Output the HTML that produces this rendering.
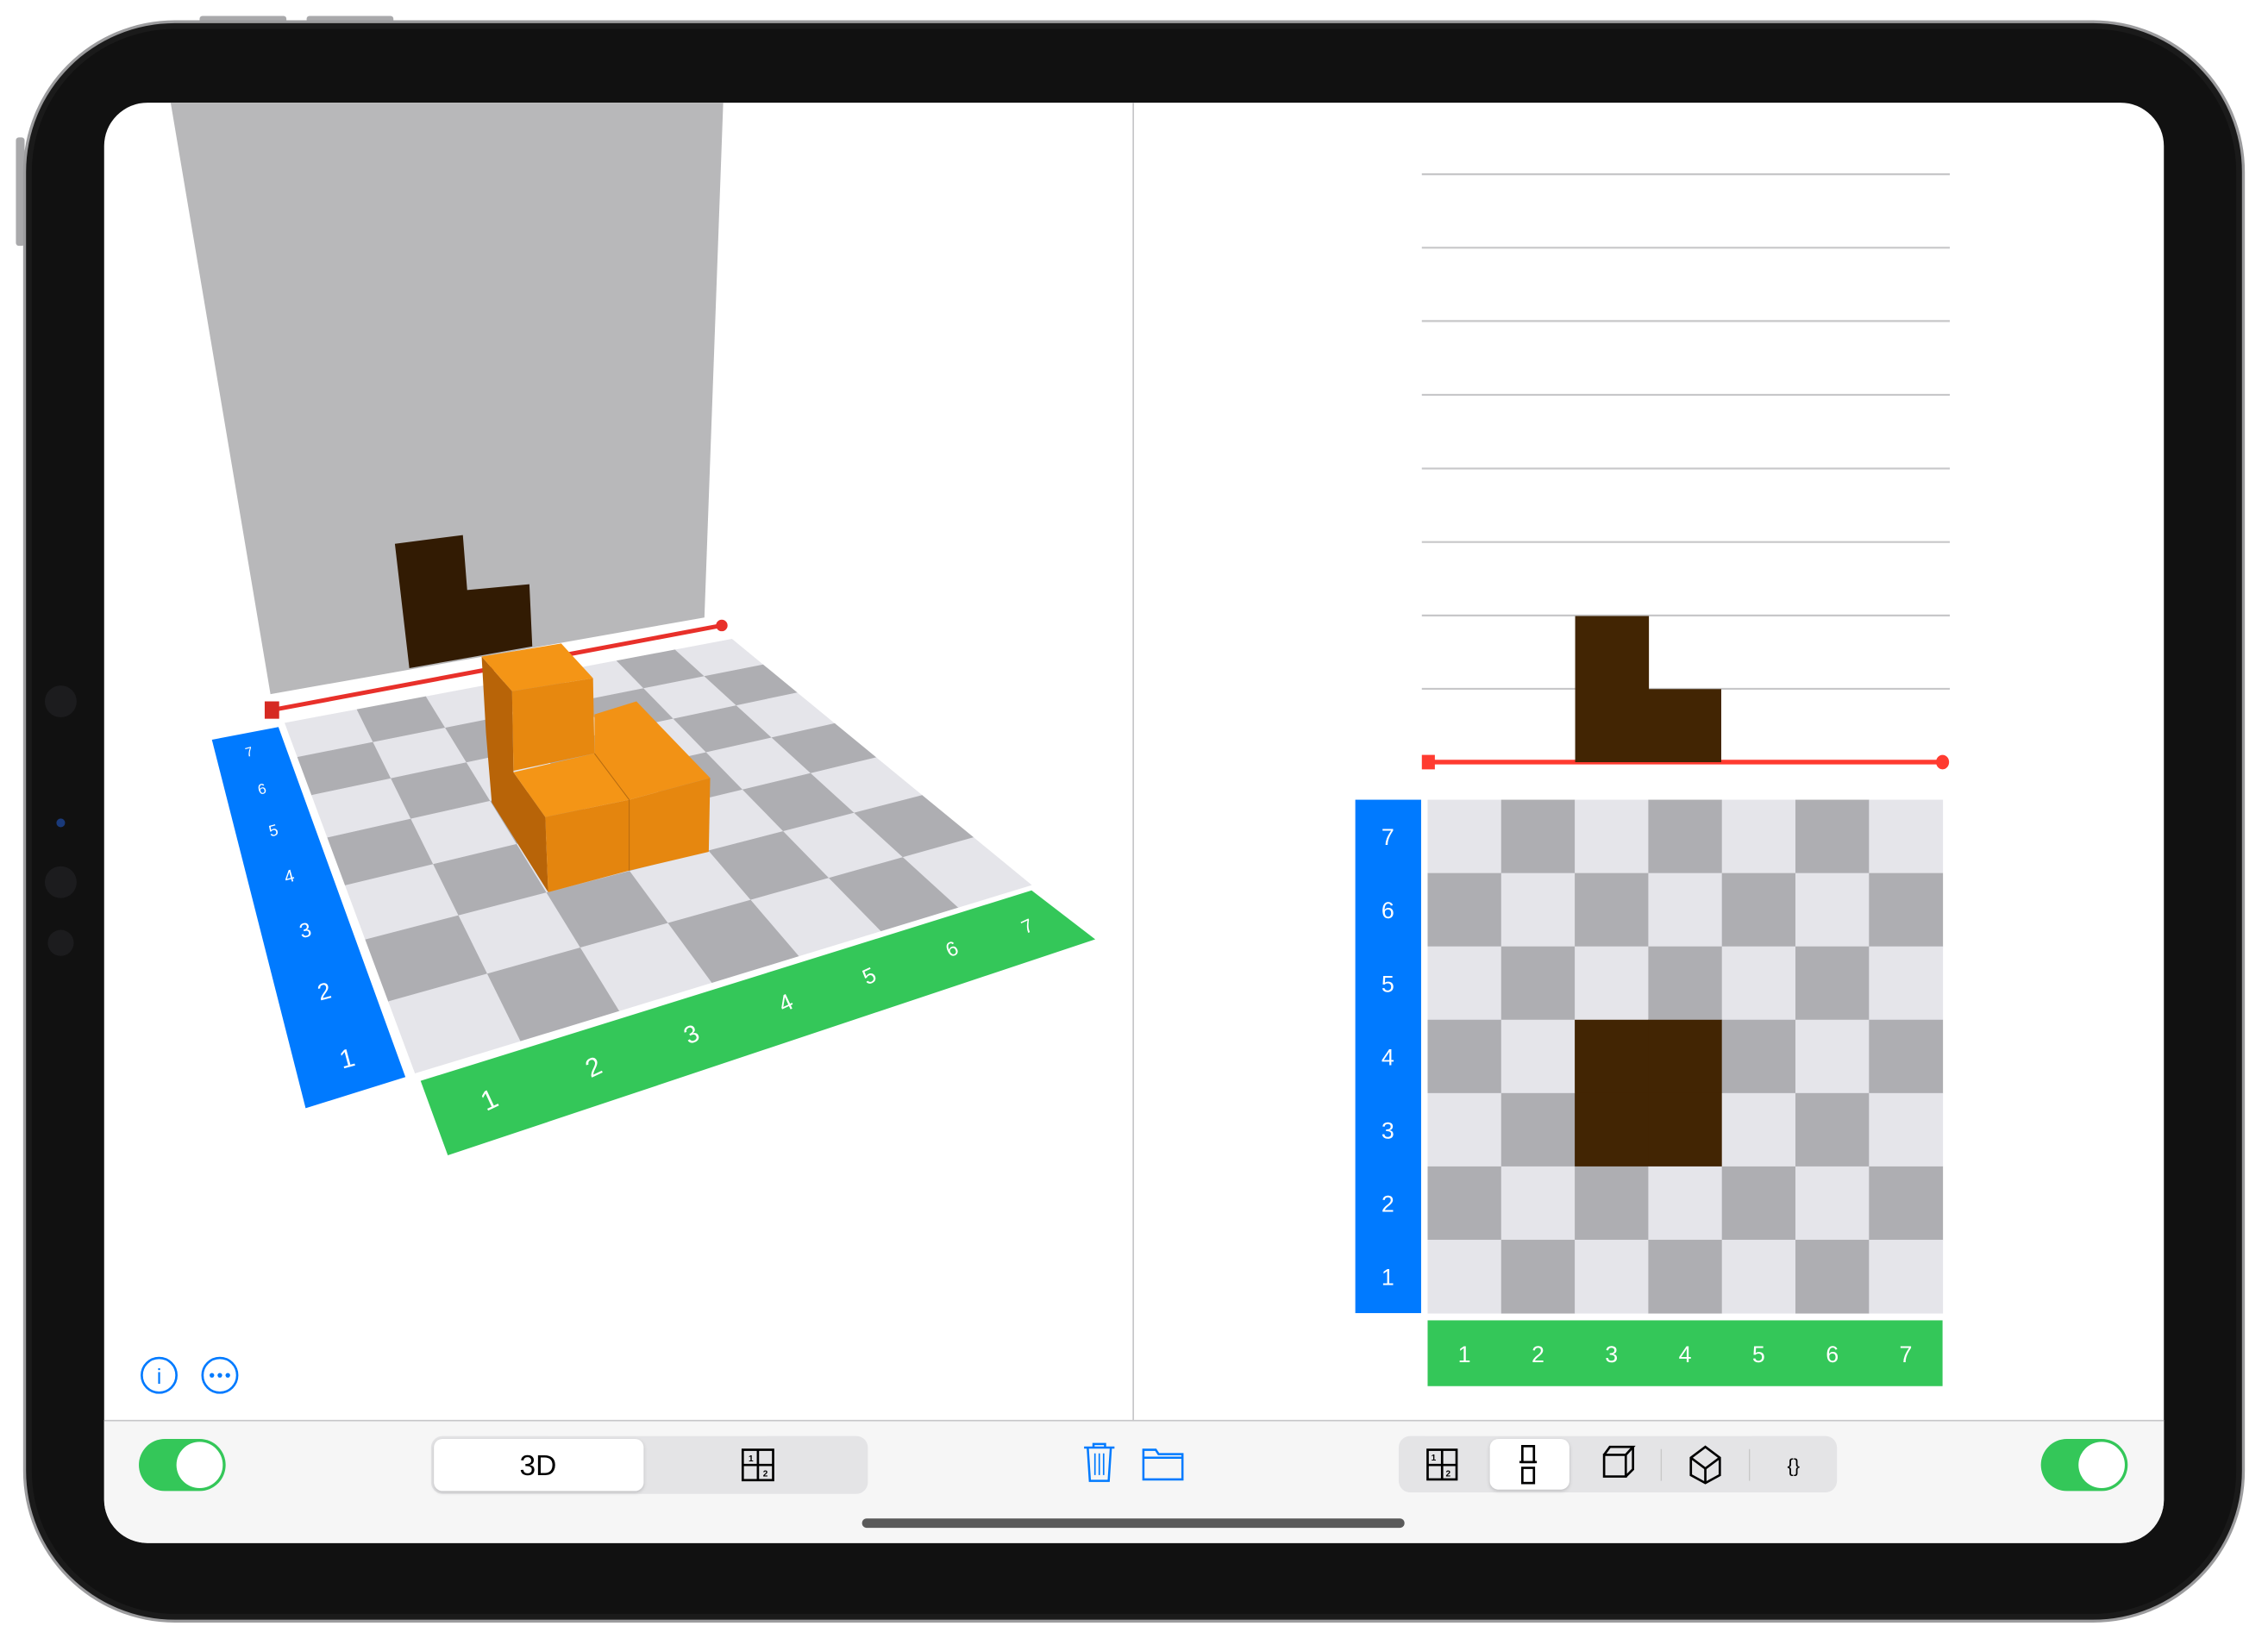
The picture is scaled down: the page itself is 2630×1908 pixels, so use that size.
<!DOCTYPE html>
<html><head><meta charset="utf-8"><style>
html,body{margin:0;padding:0;background:#fff;width:2630px;height:1908px;overflow:hidden}
svg{display:block}
text{font-family:"Liberation Sans","DejaVu Sans",sans-serif}
</style></head><body>
<svg id="s" width="2630" height="1908" viewBox="0 0 1568 1137.5" preserveAspectRatio="none" xmlns="http://www.w3.org/2000/svg">
<defs>
<filter id="sh" x="-20%" y="-20%" width="140%" height="160%"><feDropShadow dx="0" dy="1" stdDeviation="1.2" flood-opacity="0.18"/></filter>
</defs>
<rect width="1568" height="1137.5" fill="#fff"/>
<!-- device -->
<rect x="138" y="11" width="60" height="5" rx="2" fill="#a9a9ab"/>
<rect x="212" y="11" width="60" height="5" rx="2" fill="#a9a9ab"/>
<rect x="11" y="95" width="6" height="75" rx="2" fill="#a9a9ab"/>
<rect x="16" y="14" width="1536" height="1108" rx="105" fill="#9c9c9e"/>
<rect x="18" y="16" width="1532" height="1104" rx="103" fill="#1a1a1a"/>
<rect x="22" y="20" width="1524" height="1096" rx="99" fill="#111"/>
<circle cx="42" cy="485" r="11" fill="#1c1c1e"/>
<circle cx="42" cy="610" r="11" fill="#1c1c1e"/>
<circle cx="42" cy="652" r="9" fill="#1c1c1e"/>
<circle cx="42" cy="569" r="3" fill="#1a3a7a"/>
<!-- screen -->
<rect x="72" y="71" width="1424" height="996" rx="30" fill="#fff"/>
<path d="M72 982 H1496 V1037 A30 30 0 0 1 1466 1067 H102 A30 30 0 0 1 72 1037 Z" fill="#f6f6f6"/>
<line x1="72" y1="982.3" x2="1496" y2="982.3" stroke="#c6c6c8" stroke-width="1"/>
<line x1="783.5" y1="71" x2="783.5" y2="982" stroke="#c6c6c8" stroke-width="1"/>

<!-- 3D wall -->
<polygon points="118,71 500,71 487,427 187,480" fill="#b8b8ba"/>
<polygon points="273,376 320,370 323,408 366,404 368,447 283,462" fill="#321b03"/>
<g id="board"></g>
<polygon points="146.5,511.5 192.5,502.7 280.3,744.8 211.3,766.3" fill="#007aff"/>
<polygon points="290.8,747.4 713.2,615.7 757.2,649.5 309.6,798.9" fill="#34c759"/>
<g fill="#fff">
<text x="172" y="523" font-size="9" transform="rotate(-15 172 519)" text-anchor="middle">7</text>
<text x="181" y="549" font-size="10" transform="rotate(-15 181 545)" text-anchor="middle">6</text>
<text x="189" y="578" font-size="11" transform="rotate(-15 189 574)" text-anchor="middle">5</text>
<text x="200" y="610" font-size="12" transform="rotate(-15 200 606)" text-anchor="middle">4</text>
<text x="211" y="648" font-size="14" transform="rotate(-15 211 643)" text-anchor="middle">3</text>
<text x="224" y="691" font-size="16" transform="rotate(-15 224 685)" text-anchor="middle">2</text>
<text x="240" y="738" font-size="18" transform="rotate(-15 240 732)" text-anchor="middle">1</text>
<text x="338" y="767" font-size="19" transform="rotate(-25 338 760)" text-anchor="middle">1</text>
<text x="410" y="744" font-size="18" transform="rotate(-25 410 737)" text-anchor="middle">2</text>
<text x="478" y="721" font-size="17" transform="rotate(-25 478 715)" text-anchor="middle">3</text>
<text x="543" y="699" font-size="16" transform="rotate(-25 543 693)" text-anchor="middle">4</text>
<text x="601" y="680" font-size="15" transform="rotate(-25 601 675)" text-anchor="middle">5</text>
<text x="658" y="661" font-size="14" transform="rotate(-25 658 656)" text-anchor="middle">6</text>
<text x="710" y="645" font-size="13" transform="rotate(-25 710 640)" text-anchor="middle">7</text>
</g>
<line x1="188" y1="491" x2="499" y2="432.5" stroke="#e8302a" stroke-width="3"/>
<rect x="183" y="485" width="10" height="12" fill="#d62a22"/>
<circle cx="499" cy="432.5" r="4" fill="#e8302a"/>
<!-- cubes -->
<polygon points="333,454 354,478 355,534 377,565 379,617 340,555 336,507" fill="#b86408"/>
<polygon points="333,454 388,445 410,469 354,478" fill="#f49516"/>
<polygon points="354,478 410,469 411,521 355,533" fill="#e7880f"/>
<polygon points="411,494 440,485 491,538 435,553 411,521" fill="#f29215"/>
<polygon points="355,534 411,521 435,553 377,565" fill="#f49516"/>
<polygon points="377,565 435,553 435,602 379,617" fill="#e4850e"/>
<polygon points="435,553 491,538 490,589 435,602" fill="#e6870f"/>
<line x1="435" y1="553" x2="435" y2="602" stroke="#b56a10" stroke-width="0.6"/>
<line x1="411" y1="521" x2="435" y2="553" stroke="#b56a10" stroke-width="0.6"/>

<!-- right 2D view -->
<g stroke="#c7c7c9" stroke-width="1.3">
<line x1="983" y1="120.5" x2="1348" y2="120.5"/><line x1="983" y1="171.3" x2="1348" y2="171.3"/>
<line x1="983" y1="222" x2="1348" y2="222"/><line x1="983" y1="273" x2="1348" y2="273"/>
<line x1="983" y1="324" x2="1348" y2="324"/><line x1="983" y1="374.8" x2="1348" y2="374.8"/>
<line x1="983" y1="425.6" x2="1348" y2="425.6"/><line x1="983" y1="476.3" x2="1348" y2="476.3"/>
</g>
<line x1="987" y1="527" x2="1343" y2="527" stroke="#ff3b30" stroke-width="3.2"/>
<rect x="983" y="522" width="9" height="10" fill="#ff3b30"/>
<ellipse cx="1343" cy="527" rx="4.5" ry="5" fill="#ff3b30"/>
<polygon points="1089,426 1140,426 1140,476.5 1190,476.5 1190,527 1089,527" fill="#422503"/>
<g id="grid"></g>
<rect x="937" y="553" width="45.5" height="355" fill="#007aff"/>
<rect x="987" y="913" width="356" height="45.5" fill="#34c759"/>
<g id="lbl" fill="#fff" font-size="16" text-anchor="middle"></g>

<!-- info / more -->
<circle cx="110" cy="951" r="12" fill="none" stroke="#007aff" stroke-width="1.6"/>
<text x="110" y="957" font-size="15" fill="#007aff" text-anchor="middle" font-family="Liberation Mono">i</text>
<circle cx="152" cy="951" r="12" fill="none" stroke="#007aff" stroke-width="1.6"/>
<circle cx="146.5" cy="951" r="1.6" fill="#007aff"/><circle cx="152" cy="951" r="1.6" fill="#007aff"/><circle cx="157.5" cy="951" r="1.6" fill="#007aff"/>

<!-- toolbar -->
<rect x="96" y="995" width="60" height="36" rx="18" fill="#34c759"/>
<circle cx="138" cy="1013" r="16" fill="#fff"/>
<rect x="1411" y="995" width="60" height="36" rx="18" fill="#34c759"/>
<circle cx="1453" cy="1013" r="16" fill="#fff"/>

<rect x="298" y="993" width="302" height="40" rx="8" fill="#e4e4e6"/>
<rect x="300" y="995" width="145" height="36" rx="6" fill="#fff" filter="url(#sh)"/>
<text x="372" y="1020" font-size="20" text-anchor="middle" fill="#000">3D</text>
<g fill="none" stroke="#000" stroke-width="1.6">
<rect x="513.5" y="1002.5" width="21" height="21"/><line x1="524" y1="1002.5" x2="524" y2="1023.5"/><line x1="513.5" y1="1013" x2="534.5" y2="1013"/>
</g>
<text x="517.5" y="1010.5" font-size="6" font-weight="bold">1</text><text x="527.5" y="1021" font-size="6" font-weight="bold">2</text>

<!-- trash -->
<g fill="none" stroke="#007aff" stroke-width="1.5">
<path d="M749.5 1001 H770.5 M756 1001 V998.5 H764 V1001 M752 1001 L753.5 1024 H766.5 L768 1001"/>
<path d="M757 1005 V1020 M760 1005 V1020 M763 1005 V1020" stroke-width="1"/>
<path d="M790.5 1002.5 H799 L801 1005.5 H817.5 V1023 H790.5 Z M790.5 1008 H817.5"/>
</g>

<rect x="967" y="993" width="303" height="39" rx="8" fill="#e4e4e6"/>
<rect x="1030" y="995" width="55" height="35" rx="6" fill="#fff" filter="url(#sh)"/>
<line x1="1148.5" y1="1002" x2="1148.5" y2="1024" stroke="#c8c8c8" stroke-width="0.8"/>
<line x1="1209.5" y1="1002" x2="1209.5" y2="1024" stroke="#c8c8c8" stroke-width="0.8"/>
<g fill="none" stroke="#000" stroke-width="1.6">
<rect x="987" y="1002.5" width="20" height="20.5"/><line x1="997" y1="1002.5" x2="997" y2="1023"/><line x1="987" y1="1013" x2="1007" y2="1013"/>
<rect x="1052.5" y="1000" width="8" height="11"/><line x1="1050.5" y1="1011" x2="1062.5" y2="1011"/><rect x="1052.5" y="1015" width="8" height="10.5"/>
<path d="M1109 1006 H1124 V1021 H1109 Z M1109 1006 L1113 1000.5 H1129 L1124 1006 M1129 1000.5 V1016 L1124 1021"/>
<path d="M1179 1000.5 L1189 1008 V1020 L1179 1025.5 L1169 1020 V1008 Z M1169 1008 L1179 1015.5 L1189 1008 M1179 1015.5 V1025.5"/>
</g>
<text x="989.5" y="1010" font-size="6" font-weight="bold">1</text><text x="999.5" y="1021" font-size="6" font-weight="bold">2</text>
<text x="1240" y="1018" font-size="13" text-anchor="middle" fill="#000">{}</text>

<rect x="596" y="1050" width="375" height="6.5" rx="3.2" fill="#5a5a5a"/>
</svg>
<script>
(function(){
var NS="http://www.w3.org/2000/svg";
// homography
var P=[[197,500],[506,442],[713,612],[287,742]];
var x0=P[0][0],y0=P[0][1],x1=P[1][0],y1=P[1][1],x2=P[2][0],y2=P[2][1],x3=P[3][0],y3=P[3][1];
var dx1=x1-x2,dx2=x3-x2,dx3=x0-x1+x2-x3,dy1=y1-y2,dy2=y3-y2,dy3=y0-y1+y2-y3;
var den=dx1*dy2-dx2*dy1;
var g=(dx3*dy2-dx2*dy3)/den,h=(dx1*dy3-dx3*dy1)/den;
var a=x1-x0+g*x1,b=x3-x0+h*x3,c=x0,d=y1-y0+g*y1,e=y3-y0+h*y3,f=y0;
function m(u,v){var w=g*u+h*v+1;return ((a*u+b*v+c)/w).toFixed(2)+","+((d*u+e*v+f)/w).toFixed(2);}
var bd=document.getElementById("board");
for(var i=0;i<7;i++)for(var j=0;j<7;j++){
 var p=document.createElementNS(NS,"polygon");
 var u0=i/7,u1=(i+1)/7,v0=j/7,v1=(j+1)/7;
 p.setAttribute("points",[m(u0,v0),m(u1,v0),m(u1,v1),m(u0,v1)].join(" "));
 p.setAttribute("fill",(i+j)%2==0?"#e5e5ea":"#aeaeb2");
 p.setAttribute("stroke",(i+j)%2==0?"#e5e5ea":"#aeaeb2");p.setAttribute("stroke-width","0.4");
 bd.appendChild(p);
}
var gr=document.getElementById("grid");
var cw=356/7,ch=355/7;
for(var r=0;r<7;r++)for(var k=0;k<7;k++){
 var q=document.createElementNS(NS,"rect");
 q.setAttribute("x",987+k*cw);q.setAttribute("y",553+r*ch);
 q.setAttribute("width",cw+0.3);q.setAttribute("height",ch+0.3);
 var br=(k==2||k==3)&&(r==3||r==4);
 q.setAttribute("fill",br?"#422503":((r+k)%2==0?"#e5e5ea":"#aeaeb2"));
 gr.appendChild(q);
}
var lb=document.getElementById("lbl");
for(var n=0;n<7;n++){
 var t=document.createElementNS(NS,"text");
 t.setAttribute("x",959.5);t.setAttribute("y",553+n*ch+ch/2+6);t.textContent=7-n;lb.appendChild(t);
 var t2=document.createElementNS(NS,"text");
 t2.setAttribute("x",987+n*cw+cw/2);t2.setAttribute("y",942);t2.textContent=n+1;lb.appendChild(t2);
}
})();
</script>
</body></html>
